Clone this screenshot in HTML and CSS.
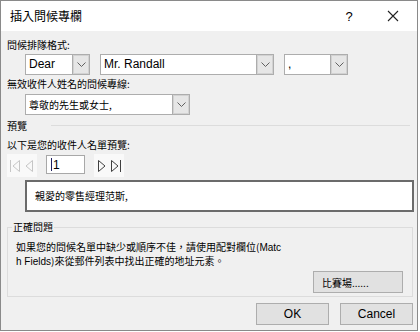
FILE: index.html
```html
<!doctype html>
<html>
<head>
<meta charset="utf-8">
<title>插入問候專欄</title>
<link rel="stylesheet" href="styles.css">
</head>
<body>
<div class="window">
	<div class="titlebar">
		<span class="title">插入問候專欄</span>
		<span class="help">?</span>
		<span class="close">
			<svg width="12" height="12" viewBox="0 0 12 12"><path d="M1 1L11 11M11 1L1 11" stroke="#222" stroke-width="1.1" fill="none"/></svg>
		</span>
	</div>

	<div class="content">
		<div class="label">問候排隊格式:</div>
		<div class="combos">
			<div class="combo w-dear"><span class="val">Dear</span><b class="arrow"><svg width="9" height="5" viewBox="0 0 9 5"><polyline points="0.5,0.5 4.5,4.5 8.5,0.5" fill="none" stroke="#606060"/></svg></b></div>
			<div class="combo w-name"><span class="val">Mr. Randall</span><b class="arrow"><svg width="9" height="5" viewBox="0 0 9 5"><polyline points="0.5,0.5 4.5,4.5 8.5,0.5" fill="none" stroke="#606060"/></svg></b></div>
			<div class="combo w-punct"><span class="val">,</span><b class="arrow"><svg width="9" height="5" viewBox="0 0 9 5"><polyline points="0.5,0.5 4.5,4.5 8.5,0.5" fill="none" stroke="#606060"/></svg></b></div>
		</div>

		<div class="label">無效收件人姓名的問候專線:</div>
		<div class="combos">
			<div class="combo w-invalid"><span class="val cjk">尊敬的先生或女士,</span><b class="arrow"><svg width="9" height="5" viewBox="0 0 9 5"><polyline points="0.5,0.5 4.5,4.5 8.5,0.5" fill="none" stroke="#606060"/></svg></b></div>
		</div>

		<div class="section-head"><span>預覽</span><i class="rule"></i></div>
		<div class="label label-gap">以下是您的收件人名單預覽:</div>

		<div class="nav">
			<div class="navbox">
				<svg width="15" height="18" viewBox="0 0 15 18"><path d="M3.5 3V15" stroke="#c6c6c6" fill="none"/><path d="M12.5 3.5V14.5L6 9Z" stroke="#c6c6c6" fill="none"/></svg>
				<svg width="15" height="18" viewBox="0 0 15 18"><path d="M10.5 3.5V14.5L4 9Z" stroke="#c6c6c6" fill="none"/></svg>
			</div>
			<div class="recno"><i class="caret"></i>1</div>
			<div class="navbox">
				<svg width="15" height="18" viewBox="0 0 15 18"><path d="M4.5 3.5V14.5L11 9Z" stroke="#404040" fill="none"/></svg>
				<svg width="15" height="18" viewBox="0 0 15 18"><path d="M2.5 3.5V14.5L9 9Z" stroke="#404040" fill="none"/><path d="M11.5 3V15" stroke="#404040" fill="none"/></svg>
			</div>
		</div>

		<div class="preview">親愛的零售經理范斯,</div>

		<fieldset class="group">
			<legend>正確問題</legend>
			<p class="hint">如果您的問候名單中缺少或順序不佳，請使用配對欄位(<span class="lat">Matc</span><br><span class="lat">h Fields</span>)來從郵件列表中找出正確的地址元素。</p>
			<div class="group-foot"><button class="btn btn-match">比賽場......</button></div>
		</fieldset>

		<div class="actions">
			<button class="btn btn-main">OK</button>
			<button class="btn btn-main">Cancel</button>
		</div>
	</div>
</div>
</body>
</html>
```

FILE: styles.css
```css
*{ margin:0; padding:0; box-sizing:border-box}
body{ background:#fff; font-family:"Liberation Sans","Noto Sans CJK TC",sans-serif; font-size:12px; color:#000}

.window{ width:418px; height:331px; border:1px solid #8a8a8a; background:#f0f0f0; display:flex; flex-direction:column}
.titlebar{ height:30px; background:#fff; display:flex; align-items:center; padding-left:9px}
.title{ font-family:"Noto Sans CJK TC",sans-serif; font-size:12px; line-height:16px; flex:1}
.help{ font-family:"Liberation Sans",sans-serif; font-size:13px; width:20px; margin-right:24px; text-align:center}
.close{ width:20px; margin-right:14px; display:flex; justify-content:center}

.content{ flex:1; padding:6px 3px 0 6px}
.label{ font-family:"Noto Sans CJK TC",sans-serif; font-size:10px; height:16px; line-height:16px}
.label-gap{ margin-top:4px}

.combos{ display:flex; gap:9px; margin:1px 0 1px 18px}
.combo{ height:21px; display:flex; background:#fff; border:1px solid #adadad}
.combo .val{ flex:1; padding-left:3px; line-height:19px; white-space:nowrap; overflow:hidden}
.combo .val.cjk{ font-family:"Noto Sans CJK TC",sans-serif; font-size:10px}
.combo .arrow{ width:17px; background:#e6e6e6; border-left:1px solid #adadad; box-shadow:inset 0 0 0 1px #d2d2d2; display:flex; align-items:center; justify-content:center}
.w-dear{ width:65px}
.w-name{ width:174px; margin-left:1px}
.w-punct{ width:64px; margin-left:1px}
.w-invalid{ width:165px; margin-top:1px}

.section-head{ display:flex; align-items:center; height:16px; margin-top:2px; margin-right:4px; font-family:"Noto Sans CJK TC",sans-serif; font-size:10px}
.section-head .rule{ flex:1; height:1px; background:#dcdcdc; margin-left:24px}

.nav{ display:flex; align-items:flex-start; gap:9px; margin-top:1px; height:23px}
.navbox{ width:30px; height:23px; background:#f9f9f9; display:flex; align-items:center}
.recno{ width:39px; height:19px; margin-top:1px; background:#fff; border:1px solid #a8a8a8; display:flex; align-items:center; padding-left:4px; font-size:12px}
.caret{ width:1px; height:13px; background:#202060; margin-right:1px}

.preview{ height:32px; margin:3px 0 0 18px; background:#fff; border:2px solid #6b6b6b; font-family:"Noto Sans CJK TC",sans-serif; font-size:10px; line-height:28px; padding-left:8px}

.group{ margin-top:7px; margin-right:1px; border:1px solid #dcdcdc; padding:5px 8px 4px 8px; height:78px}
.group legend{ font-family:"Noto Sans CJK TC",sans-serif; font-size:10px; line-height:16px; margin-left:-4px; padding:0 1px}
.hint{ font-family:"Noto Sans CJK TC",sans-serif; font-size:10px; line-height:13px}
.hint .lat{ font-family:"Liberation Sans",sans-serif; font-size:10px}
.group-foot{ display:flex; justify-content:flex-end; margin-top:3px}

.btn{ background:#e1e1e1; border:1px solid #adadad; color:#000; font-family:"Liberation Sans","Noto Sans CJK TC",sans-serif; font-size:12px}
.btn-match{ width:90px; height:22px; margin-right:1px; text-align:left; padding-left:8px; font-family:"Noto Sans CJK TC",sans-serif; font-size:10px}
.actions{ display:flex; justify-content:flex-end; gap:11px; margin-top:6px; margin-right:1px}
.btn-main{ width:73px; height:22px}
```
